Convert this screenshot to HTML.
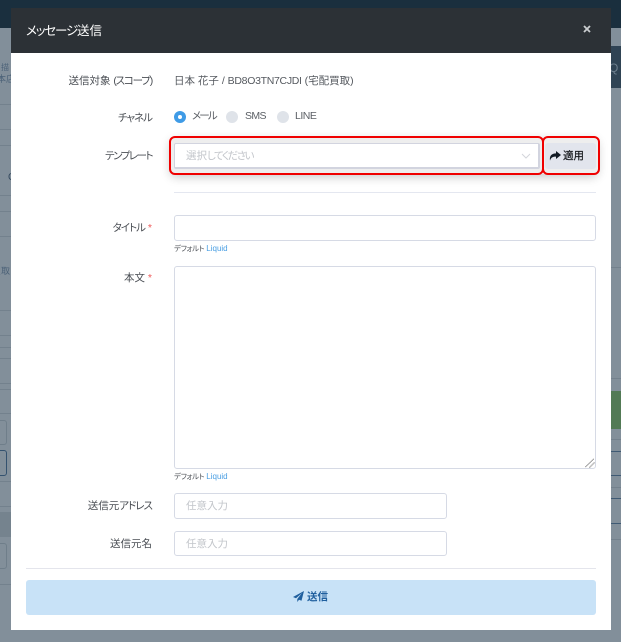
<!DOCTYPE html>
<html lang="ja">
<head>
<meta charset="utf-8">
<title>メッセージ送信</title>
<style>
html,body{margin:0;padding:0}
body{width:621px;height:642px;position:relative;overflow:hidden;background:#828f9a;font-family:"Liberation Sans","Noto Sans CJK JP",sans-serif;color:#4b4f56;font-feature-settings:"palt" 1}
.a{position:absolute;white-space:nowrap}
.bg{position:absolute}
.modal{position:absolute;left:11px;top:8px;width:600px;height:622px;background:#fff}
.head{position:absolute;left:11px;top:8px;width:600px;height:45px;background:#2c3136}
.lbl{position:absolute;right:469px;font-size:10.5px;line-height:16px;color:#4a4e54;white-space:nowrap}
.inp{position:absolute;box-sizing:border-box;background:#fff;border:1px solid #d6dae5;border-radius:3px}
.ph{position:absolute;font-size:10.5px;line-height:16px;color:#c2c5ca;white-space:nowrap}
.radio{position:absolute;width:12px;height:12px;border-radius:50%;background:#dfe3e9}
.help{position:absolute;left:174px;font-size:7.5px;line-height:10px;color:#50545a;white-space:nowrap}
.help b{font-weight:400;letter-spacing:-.35px}
.help span{color:#4a9fe3;font-size:8px}
.red{position:absolute;box-sizing:border-box;border:2px solid #f00000;border-radius:6px}
.req{color:#ef5a5a}
.k{letter-spacing:-1px}
</style>
</head>
<body>
<!-- backdrop page remnants -->
<div class="bg" style="left:0;top:0;width:621px;height:28px;background:#1a2f3e"></div>
<div class="bg" style="left:611px;top:46px;width:10px;height:42px;background:#2f4354"></div>
<div class="bg" style="left:611px;top:391px;width:10px;height:38px;background:#527a55"></div>
<div class="bg" style="left:0;top:104px;width:11px;height:1px;background:#73818d"></div>
<div class="bg" style="left:0;top:129px;width:11px;height:1px;background:#73818d"></div>
<div class="bg" style="left:0;top:145px;width:11px;height:1px;background:#73818d"></div>
<div class="bg" style="left:0;top:195px;width:11px;height:1px;background:#73818d"></div>
<div class="bg" style="left:0;top:211px;width:11px;height:1px;background:#73818d"></div>
<div class="bg" style="left:0;top:236px;width:11px;height:1px;background:#73818d"></div>
<div class="bg" style="left:0;top:310px;width:11px;height:1px;background:#73818d"></div>
<div class="bg" style="left:0;top:335px;width:11px;height:1px;background:#73818d"></div>
<div class="bg" style="left:0;top:347px;width:11px;height:1px;background:#73818d"></div>
<div class="bg" style="left:0;top:358px;width:11px;height:1px;background:#73818d"></div>
<div class="bg" style="left:0;top:383px;width:11px;height:1px;background:#73818d"></div>
<div class="bg" style="left:0;top:389px;width:11px;height:1px;background:#73818d"></div>
<div class="bg" style="left:0;top:413px;width:11px;height:1px;background:#73818d"></div>
<div class="bg" style="left:0;top:481px;width:11px;height:1px;background:#73818d"></div>
<div class="bg" style="left:0;top:506px;width:11px;height:1px;background:#73818d"></div>
<div class="bg" style="left:0;top:512px;width:11px;height:25px;background:#75838e"></div>
<div class="bg" style="left:0;top:584px;width:11px;height:1px;background:#73818d"></div>
<div class="bg" style="box-sizing:border-box;left:-6px;top:420px;width:13px;height:25px;border:1px solid #6f7e8a;border-radius:3px"></div>
<div class="bg" style="box-sizing:border-box;left:-6px;top:450px;width:13px;height:26px;border:1px solid #34526f;border-radius:3px"></div>
<div class="bg" style="box-sizing:border-box;left:-6px;top:543px;width:13px;height:26px;border:1px solid #6f7e8a;border-radius:3px"></div>
<div class="bg" style="left:611px;top:439px;width:10px;height:1px;background:#73818d"></div>
<div class="bg" style="left:611px;top:451px;width:10px;height:1px;background:#3f5a74"></div>
<div class="bg" style="left:611px;top:475px;width:10px;height:1px;background:#3f5a74"></div>
<div class="bg" style="left:611px;top:487px;width:10px;height:1px;background:#73818d"></div>
<div class="bg" style="left:611px;top:498px;width:10px;height:1px;background:#3f5a74"></div>
<div class="bg" style="left:611px;top:523px;width:10px;height:1px;background:#3f5a74"></div>
<div class="bg" style="left:611px;top:539px;width:10px;height:1px;background:#73818d"></div>
<div class="bg" style="left:611px;top:267px;width:10px;height:1px;background:#73818d"></div>
<div class="bg" style="left:611px;top:378px;width:10px;height:1px;background:#73818d"></div>
<div class="a" style="left:1px;top:63px;font-size:8px;line-height:10px;color:#4c6278">描</div>
<div class="a" style="left:-3px;top:73px;font-size:9px;line-height:12px;color:#4c6278">本店</div>
<div class="a" style="left:-8px;top:265px;font-size:9px;line-height:12px;color:#4c6278">買取</div>
<div class="a" style="left:8px;top:172px;font-size:10px;line-height:12px;color:#34495e">C</div>
<div class="a" style="left:609px;top:61px;font-size:12px;line-height:14px;color:#6d7f8e">Q</div>

<div class="modal"></div>
<div class="head"></div>
<div class="a" style="left:26px;top:22px;font-size:12.5px;line-height:18px;color:#fff"><span style="letter-spacing:-1.2px">メッセージ</span>送信</div>
<svg class="a" style="left:583px;top:25px" width="8" height="8" viewBox="0 0 8 8"><path d="M1 1L7 7M7 1L1 7" stroke="#c9cccf" stroke-width="1.8" fill="none"/></svg>

<div class="lbl" style="top:73px">送信対象 <span style="letter-spacing:-1.2px">(スコープ)</span></div>
<div class="a" style="left:174px;top:73px;font-size:10.5px;line-height:16px;color:#55595f">日本 花子 / <span style="letter-spacing:-.3px">BD8O3TN7CJDI</span> (宅配買取)</div>

<div class="lbl" style="top:110px"><span class="k">チャネル</span></div>
<div class="radio" style="left:174px;top:111px;background:#3f9be6"></div>
<div class="bg" style="left:178px;top:115px;width:4px;height:4px;border-radius:50%;background:#fff"></div>
<div class="a" style="left:192px;top:108px;font-size:10.5px;line-height:16px;color:#5c6066;letter-spacing:-1.8px">メール</div>
<div class="radio" style="left:226px;top:111px"></div>
<div class="a" style="left:245px;top:108px;font-size:10.5px;line-height:16px;color:#5c6066;letter-spacing:-.6px">SMS</div>
<div class="radio" style="left:277px;top:111px"></div>
<div class="a" style="left:295px;top:108px;font-size:10.5px;line-height:16px;color:#5c6066;letter-spacing:-.5px">LINE</div>

<div class="lbl" style="top:148px"><span style="letter-spacing:-1.5px">テンプレート</span></div>
<div class="bg" style="left:170px;top:137px;width:428px;height:37px;box-shadow:0 3px 10px rgba(0,0,0,.22);border-radius:6px"></div>
<div class="bg" style="left:170px;top:137px;width:428px;height:37px;background:#eeeeee;border-radius:6px"></div>
<div class="inp" style="left:174px;top:143px;width:366px;height:26px;border-color:#d2d4df;border-width:1px 2px 2px 1px;border-radius:2px"></div>
<div class="ph" style="left:186px;top:148px">選択<span style="letter-spacing:-1.5px">してください</span></div>
<svg class="a" style="left:521px;top:153px" width="10" height="6" viewBox="0 0 10 6"><path d="M1 1L5 5L9 1" stroke="#d3d5db" stroke-width="1" fill="none"/></svg>
<div class="bg" style="left:545px;top:143px;width:51px;height:26px;background:#e2e5ed;border-radius:3px"></div>
<svg class="a" style="left:549px;top:151px" width="12" height="10" viewBox="0 0 12 10"><path d="M7 0L12 4L7 8V5.600C4 5.600 2 6.200 1 9.600C0.300 5 2.500 2.500 7 2.400Z" fill="#111a24"/></svg>
<div class="a" style="left:563px;top:148px;font-size:10.5px;line-height:16px;color:#14171b;-webkit-text-stroke:.2px #14171b">適用</div>
<div class="red" style="left:169px;top:136px;width:375px;height:39px"></div>
<div class="red" style="left:542px;top:136px;width:58px;height:39px"></div>

<div class="bg" style="left:174px;top:192px;width:422px;height:1px;background:#e4e7f0"></div>

<div class="lbl" style="top:220px"><span class="k">タイトル</span> <span class="req">*</span></div>
<div class="inp" style="left:174px;top:215px;width:422px;height:26px"></div>
<div class="help" style="top:244px"><b>デフォルト</b> <span>Liquid</span></div>

<div class="lbl" style="top:270px">本文 <span class="req">*</span></div>
<div class="inp" style="left:174px;top:266px;width:422px;height:203px"></div>
<svg class="a" style="left:585px;top:458px" width="10" height="10" viewBox="0 0 10 10"><path d="M0.500 9L9 0.500M4.500 9.500L9.500 4.500" stroke="#6a6a6a" stroke-width="1" stroke-dasharray="1 .5" fill="none"/></svg>
<div class="help" style="top:472px"><b>デフォルト</b> <span>Liquid</span></div>

<div class="lbl" style="top:498px">送信元<span class="k">アドレス</span></div>
<div class="inp" style="left:174px;top:493px;width:273px;height:26px"></div>
<div class="ph" style="left:186px;top:498px">任意入力</div>

<div class="lbl" style="top:536px">送信元名</div>
<div class="inp" style="left:174px;top:531px;width:273px;height:25px"></div>
<div class="ph" style="left:186px;top:536px">任意入力</div>

<div class="bg" style="left:26px;top:568px;width:570px;height:1px;background:#e4e5ec"></div>
<div class="bg" style="left:26px;top:580px;width:570px;height:35px;background:#c8e2f7;border-radius:3px"></div>
<svg class="a" style="left:293px;top:591px" width="11" height="11" viewBox="0 0 11 11"><path d="M11 0L0 6L3 7.300L9 2L4.300 8V11L6 8.800L8.500 9.800Z" fill="#1f5f9e"/></svg>
<div class="a" style="left:307px;top:589px;font-size:10.5px;line-height:16px;color:#1f5f9e;font-weight:700">送信</div>
</body>
</html>
